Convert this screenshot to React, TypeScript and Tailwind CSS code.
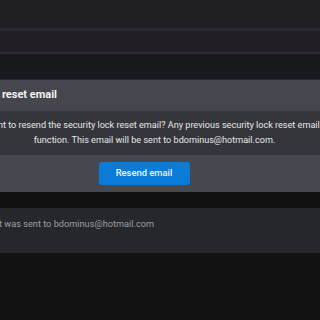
import React from "react";

// Modal "resend security lock reset email" sobre la página oscurecida
export default function App() {
  return (
    <div className="w-[320px] h-[320px] overflow-hidden bg-[#121212] font-['Roboto',sans-serif]">
      {/* Fondo (página detrás del overlay) */}
      <div className="h-[28px] bg-[#1f1e23]" />
      <div className="h-[3px] bg-[#2b2a30]" />
      <div className="h-[21px] bg-[#211f25]" />
      <div className="h-[2px] bg-[#2b2a30]" />
      <div className="h-[25px] bg-[#18191c]" />

      {/* Modal */}
      <div className="w-[600px] ml-[-153px] border-t border-[#2a2b30]">
        <div className="h-[31px] bg-[#46474e] flex items-center">
          <div className="w-[210px] flex justify-end">
            <span className="whitespace-nowrap text-[11px] font-bold text-[#f2f2f2]">
              Resend security lock reset email
            </span>
          </div>
        </div>
        <div className="h-[44px] bg-[#35363b] flex flex-col justify-center items-start pl-[70px]">
          <p className="text-[9.1px] leading-[15px] text-[#e6e6e8] text-center whitespace-nowrap">
            Are you sure you want to resend the security lock reset email? Any previous security lock reset email link will no longer
            <br />
            function. This email will be sent to bdominus@hotmail.com.
          </p>
        </div>
        <div className="h-[37px] bg-[#46484f] flex items-center justify-center">
          <button className="w-[91px] h-[23px] ml-[-6px] rounded-[3px] bg-[#0b7bd8] text-[9.4px] font-medium text-[#f4f6fa]">
            Resend email
          </button>
        </div>
      </div>

      {/* Página debajo */}
      <div className="h-[16px] bg-[#111112]" />
      <div className="h-[45px] bg-[#25272c] pt-[9px]">
        <div className="w-[154px] flex justify-end">
          <p className="text-[9.2px] text-[#9c9ea3] whitespace-nowrap">
            A security lock reset email request was sent to bdominus@hotmail.com
          </p>
        </div>
      </div>
    </div>
  );
}
